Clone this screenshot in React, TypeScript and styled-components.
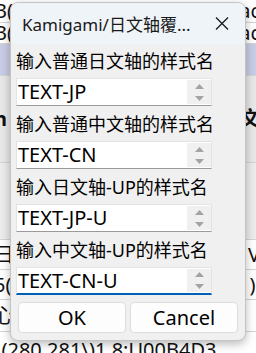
import React from "react";
import styled, { createGlobalStyle } from "styled-components";

const GlobalStyle = createGlobalStyle`
	html, body {
		margin: 0;
		padding: 0;
		width: 256px;
		height: 353px;
		overflow: hidden;
		background: #ffffff;
		font-family: "Noto Sans", "Noto Sans CJK SC", sans-serif;
	}
`;

const Screen = styled.div`
	position: relative;
	width: 256px;
	height: 353px;
	overflow: hidden;
`;

// sheet rows peeking out from behind the dialog
const Sheet = styled.div`
	display: flex;
	flex-direction: column;
`;
const SheetRow = styled.div<{ $h: number; $bg: string; $bold?: boolean }>`
	display: flex;
	align-items: center;
	justify-content: space-between;
	height: ${(p) => p.$h}px;
	flex-shrink: 0;
	background: ${(p) => p.$bg};
	border-bottom: 1px solid #d4d4d4;
	box-sizing: border-box;
	font-size: 20px;
	line-height: 20px;
	font-weight: ${(p) => (p.$bold ? 700 : 400)};
	color: #111;
	white-space: nowrap;
	overflow: hidden;
`;
const SheetLeft = styled.span`
	margin-left: -6px;
`;
const SheetRight = styled.span`
	margin-right: -4px;
`;

const Dialog = styled.div`
	position: absolute;
	left: 10px;
	top: 2px;
	width: 236px;
	height: 339px;
	box-sizing: border-box;
	display: flex;
	flex-direction: column;
	border: 1px solid #c4c4c4;
	border-radius: 8px;
	overflow: hidden;
	background: #f0f0f0;
	box-shadow: 0 3px 10px rgba(0, 0, 0, 0.28);
`;
const TitleBar = styled.div`
	display: flex;
	align-items: center;
	height: 41px;
	flex-shrink: 0;
	padding: 0 16px 0 11px;
	background: #eff4f9;
`;
const Title = styled.div`
	flex: 1;
	font-size: 17px;
	color: #1a1a1a;
	white-space: nowrap;
`;
const Body = styled.div`
	display: flex;
	flex-direction: column;
	padding: 4px 7px 4px 5px;
`;
const Field = styled.div`
	display: flex;
	flex-direction: column;
	gap: 4px;
	margin-bottom: 5px;
`;
const Label = styled.div`
	height: 26px;
	line-height: 26px;
	font-size: 18px;
	color: #000;
	white-space: nowrap;
`;
const Input = styled.div<{ $focused?: boolean }>`
	display: flex;
	align-items: stretch;
	width: 196px;
	height: 28px;
	box-sizing: border-box;
	background: #fff;
	border: 1px solid #e3e3e3;
	border-bottom: ${(p) => (p.$focused ? "2px solid #005fb8" : "1px solid #9a9a9a")};
`;
const InputText = styled.div`
	flex: 1;
	padding-left: 1px;
	font-size: 20px;
	line-height: 26px;
	color: #000;
`;
const Spin = styled.div`
	display: flex;
	flex-direction: column;
	align-items: center;
	justify-content: center;
	gap: 7px;
	width: 24px;
	margin: 1px 0 1px 0;
	background: #f0f0f0;
`;
const Buttons = styled.div`
	display: grid;
	grid-template-columns: 1fr 1fr;
	gap: 4px;
	margin: 2px 0 0 2px;
`;
const Button = styled.div`
	display: flex;
	align-items: center;
	justify-content: center;
	height: 31px;
	box-sizing: border-box;
	background: #fdfdfd;
	border: 1px solid #dcdcdc;
	border-radius: 4px;
	font-size: 20px;
	color: #000;
`;

function Arrow({ up }: { up?: boolean }) {
	return (
		<svg width="9" height="5" viewBox="0 0 9 5">
			<polygon points={up ? "4.5,0 9,5 0,5" : "0,0 9,0 4.5,5"} fill="#a3a3a3" />
		</svg>
	);
}

function CloseIcon() {
	return (
		<svg width="14" height="13" viewBox="0 0 14 13">
			<path d="M1 0.5 L13 12.5 M13 0.5 L1 12.5" stroke="#1b1b1b" strokeWidth="1.3" />
		</svg>
	);
}

const rows = [
	{ h: 23, bg: "#fff", l: "B(", r: "ac" },
	{ h: 21, bg: "#fff", l: "B(", r: "ac" },
	{ h: 32, bg: "#c9cde5", l: "", r: "" },
	{ h: 87, bg: "#e8e8e8", l: "n", r: "文", bold: true },
	{ h: 77, bg: "#ececec", l: "", r: "" },
	{ h: 30, bg: "#fff", l: "日", r: "V" },
	{ h: 30, bg: "#fff", l: "5(", r: ")'" },
	{ h: 32, bg: "#fff", l: "心", r: "" },
	{ h: 36, bg: "#fff", l: "\\(280,281\\)1,8:U00B4D3", r: "" },
];

const fields = [
	{ label: "输入普通日文轴的样式名", value: "TEXT-JP" },
	{ label: "输入普通中文轴的样式名", value: "TEXT-CN" },
	{ label: "输入日文轴-UP的样式名", value: "TEXT-JP-U" },
	{ label: "输入中文轴-UP的样式名", value: "TEXT-CN-U", focused: true },
];

export default function App() {
	return (
		<Screen>
			<GlobalStyle />
			<Sheet>
				{rows.map((r, i) => (
					<SheetRow key={i} $h={r.h} $bg={r.bg} $bold={r.bold}>
						<SheetLeft>{r.l}</SheetLeft>
						<SheetRight>{r.r}</SheetRight>
					</SheetRow>
				))}
			</Sheet>

			<Dialog>
				<TitleBar>
					<Title>Kamigami/日文轴覆...</Title>
					<CloseIcon />
				</TitleBar>
				<Body>
					{fields.map((f) => (
						<Field key={f.value}>
							<Label>{f.label}</Label>
							<Input $focused={f.focused}>
								<InputText>{f.value}</InputText>
								<Spin>
									<Arrow up />
									<Arrow />
								</Spin>
							</Input>
						</Field>
					))}
					<Buttons>
						<Button>OK</Button>
						<Button>Cancel</Button>
					</Buttons>
				</Body>
			</Dialog>
		</Screen>
	);
}
